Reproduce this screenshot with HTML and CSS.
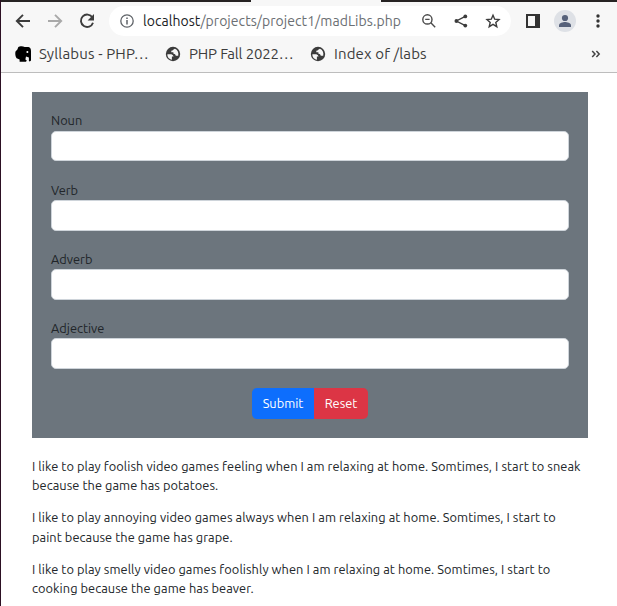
FILE: index.html
```html
<!DOCTYPE html>
<html lang="en">
<head>
<meta charset="utf-8">
<title>Mad Libs</title>
<link rel="stylesheet" href="styles.css">
</head>
<body>
<svg width="0" height="0" class="defs" aria-hidden="true">
  <symbol id="globe" viewBox="0 0 16 16"><circle cx="8" cy="8" r="7.2" fill="#3c3c3c"/><path d="M2.4 8.2H6.3Q8 8.4 8.6 10.4H6.9V13.7C4.2 13.3 2.2 11 2.4 8.2ZM9.9 2.7C8.4 3 8.3 4.6 6.3 4.7V6.3H8.4V7.8Q10.4 7.6 10.8 9.7H13.2C13.9 6.5 12.6 3.8 9.9 2.7Z" fill="#f7f7f7"/></symbol>
</svg>
<div class="window">
  <div class="tabstrip"><span class="tab"></span></div>
  <header class="toolbar">
    <svg class="icon back" viewBox="0 0 16 16"><path d="M15 8H2M8 1.8 1.8 8 8 14.2" fill="none" stroke="#3c3c3c" stroke-width="1.9"/></svg>
    <svg class="icon forward" viewBox="0 0 16 16"><path d="M1 8h13M8 1.8 14.2 8 8 14.2" fill="none" stroke="#a9a9a9" stroke-width="1.9"/></svg>
    <svg class="icon reload" viewBox="0 0 16 16"><path d="M13.4 4.5A6.2 6.2 0 1 0 14 9.7" fill="none" stroke="#3c3c3c" stroke-width="1.9"/><path d="M15 1v6.4H8.6Z" fill="#3c3c3c"/></svg>
    <div class="address">
      <svg class="icon" viewBox="0 0 16 16"><circle cx="8" cy="8" r="6.2" fill="none" stroke="#5f6368" stroke-width="1.3"/><path d="M8 7v4.4M8 4.4v1.7" stroke="#5f6368" stroke-width="1.5"/></svg>
      <span class="url"><b>localhost</b>/projects/project1/madLibs.php</span>
      <svg class="icon zoom" viewBox="0 0 16 16"><circle cx="6.4" cy="6.4" r="4.6" fill="none" stroke="#4a4a4a" stroke-width="1.4"/><path d="M4.2 6.4h4.4M9.8 9.8l4.4 4.4" stroke="#4a4a4a" stroke-width="1.4"/></svg>
      <svg class="icon share" viewBox="0 0 16 16"><path d="M12.3 3.4 3.4 8l8.9 4.6" fill="none" stroke="#3c3c3c" stroke-width="1.4"/><g fill="#3c3c3c"><circle cx="12.3" cy="3.4" r="1.9"/><circle cx="3.4" cy="8" r="1.9"/><circle cx="12.3" cy="12.6" r="1.9"/></g></svg>
      <svg class="icon star" viewBox="0 0 16 16"><path d="M8 2.2 9.7 6.2 14 6.6 10.8 9.4 11.8 13.7 8 11.4 4.2 13.7 5.2 9.4 2 6.6 6.3 6.2Z" fill="none" stroke="#3c3c3c" stroke-width="1.4"/></svg>
    </div>
    <svg class="icon panel" viewBox="0 0 16 16"><path d="M1 1h14v14H1ZM3 3v10h7V3Z" fill="#333" fill-rule="evenodd"/></svg>
    <svg class="avatar" viewBox="0 0 22 22"><circle cx="11" cy="11" r="11" fill="#dee1e6"/><circle cx="11" cy="8" r="3.1" fill="#56617a"/><path d="M5 17v-1.7c0-2.2 4-3.3 6-3.3s6 1.1 6 3.3V17Z" fill="#56617a"/></svg>
    <svg class="icon dots" viewBox="0 0 16 16"><g fill="#333"><circle cx="8" cy="3" r="1.7"/><circle cx="8" cy="8" r="1.7"/><circle cx="8" cy="13" r="1.7"/></g></svg>
  </header>
  <nav class="bookmarks">
    <a class="bm first"><svg class="icon" viewBox="0 0 16 16"><path d="M3.2 1.2C4.5.1 8 0 9.6 1H13.5C15.2 1.2 16 3 16 5v9.6l-1.2.9-.9-.6V11.4L11 10.6 10.4 13.6 11.8 14.4 11 15.8H4.6V13.4L1.6 12.2C.3 10.5 0 7.2.5 5.4L2.4 3.6Z" fill="#000"/><circle cx="12.4" cy="6" r="1" fill="#fff"/></svg><span>Syllabus - PHP…</span></a>
    <a class="bm second"><svg class="icon" viewBox="0 0 16 16"><use href="#globe"/></svg><span>PHP Fall 2022…</span></a>
    <a class="bm third"><svg class="icon" viewBox="0 0 16 16"><use href="#globe"/></svg><span>Index of /labs</span></a>
    <svg class="more" viewBox="0 0 10 8"><path d="M1.2 1 4 4 1.2 7M5.4 1 8.2 4 5.4 7" fill="none" stroke="#444" stroke-width="1.5"/></svg>
  </nav>
  <main>
    <form>
      <div class="field"><label for="noun">Noun</label><input id="noun" type="text"></div>
      <div class="field"><label for="verb">Verb</label><input id="verb" type="text"></div>
      <div class="field"><label for="adverb">Adverb</label><input id="adverb" type="text"></div>
      <div class="field"><label for="adjective">Adjective</label><input id="adjective" type="text"></div>
      <div class="buttons"><button class="submit" type="button">Submit</button><button class="reset" type="button">Reset</button></div>
    </form>
    <p>I like to play foolish video games feeling when I am relaxing at home. Somtimes, I start to sneak<br>because the game has potatoes.</p>
    <p>I like to play annoying video games always when I am relaxing at home. Somtimes, I start to<br>paint because the game has grape.</p>
    <p>I like to play smelly video games foolishly when I am relaxing at home. Somtimes, I start to<br>cooking because the game has beaver.</p>
  </main>
</div>
</body>
</html>
```
FILE: styles.css
```css
* { box-sizing: border-box; }
body { margin: 0; background: #fff; font-family: Ubuntu, "Noto Sans", sans-serif; color: #212529; overflow: hidden; }
.defs { display: block; }
.window { height: 606px; overflow: hidden; border-left: 1px solid #2c1023; }
.tabstrip { height: 2px; background: #262323; padding-left: 250px; }
.tab { display: block; width: 130px; height: 2px; background: #f7f7f7; }
.toolbar { height: 36px; background: #f7f7f7; display: flex; align-items: center; padding: 2px 11px 0 14px; }
.icon { width: 16px; height: 16px; flex: none; display: block; }
.forward { margin-left: 16px; }
.reload { margin-left: 16px; }
.address { height: 30px; width: 402px; flex: none; margin-left: 14px; padding-left: 10px; border-radius: 15px; background: #fff; display: flex; align-items: center; }
.url { width: 268px; margin-left: 8px; font-size: 14px; letter-spacing: .05px; color: #6b6f73; white-space: nowrap; }
.url b { font-weight: 400; color: #202124; }
.zoom { margin-left: 10px; }
.share, .star { margin-left: 16px; }
.panel { margin-left: 14px; }
.avatar { width: 22px; height: 22px; margin-left: 13px; flex: none; }
.dots { margin-left: 14px; }
.bookmarks { height: 35px; background: #f7f7f7; border-bottom: 1px solid #bdbdbd; display: flex; align-items: center; padding: 0 16px 3px 14px; font-size: 15px; color: #3c3c3c; white-space: nowrap; }
.bm { display: flex; align-items: center; gap: 8px; }
.first { width: 150px; letter-spacing: .15px; }
.second { width: 145px; letter-spacing: -.17px; }
.third { width: 240px; letter-spacing: .13px; }
.more { width: 10px; height: 8px; margin-left: auto; }
main { padding: 19px 29px 0 31px; font-size: 12.8px; line-height: 19.2px; }
form { height: 346px; margin-bottom: 19.2px; padding: 19px 19px 0; background: #6c757d; }
.field { height: 69px; }
label { display: block; height: 20px; padding-top: 1px; }
input { display: block; width: 100%; height: 31px; border: 1px solid #ced4da; border-radius: 5px; background: #fff; padding: 0 10px; }
.field:first-child label { padding-top: 0; }
.field:first-child input { height: 30px; }
.buttons { display: flex; justify-content: center; padding-top: 1px; }
button { height: 31px; border: 0; padding: 0 0 2px; color: #fff; font: 12.8px Ubuntu, "Noto Sans", sans-serif; }
.submit { width: 62px; background: #0d6efd; border-radius: 5px 0 0 5px; }
.reset { width: 54px; background: #dc3545; border-radius: 0 5px 5px 0; }
p { margin: 0 0 12.8px; white-space: nowrap; letter-spacing: .065px; }
```
